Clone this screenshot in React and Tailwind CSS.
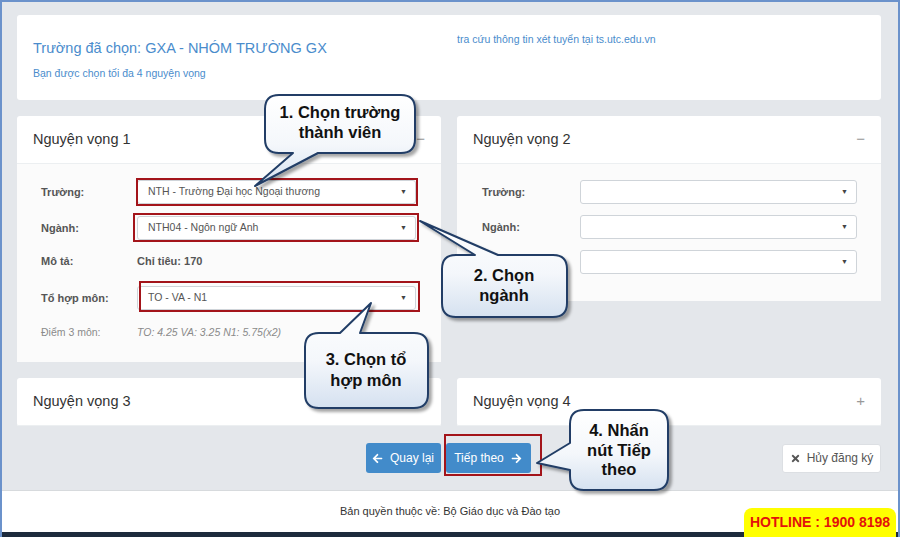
import { FaArrowLeft, FaArrowRight, FaTimes } from "react-icons/fa";

function Select({ value, w }) {
  return (
    <div className={`flex h-[24px] items-center justify-between rounded-[3px] border border-[#cfd4d9] bg-white pl-[10px] pr-[8px] text-[10.5px] text-[#555] ${w}`}>
      <span>{value}</span>
      <span className="text-[7px] text-[#444]">▼</span>
    </div>
  );
}

function Row({ label, children, labelW, className = "" }) {
  return (
    <div className={`flex items-center ${className}`}>
      <div className={`shrink-0 text-[11px] font-bold text-[#555] ${labelW}`}>{label}</div>
      {children}
    </div>
  );
}

function CardHead({ title, sign }) {
  return (
    <div className="flex h-[48px] items-center justify-between border-b border-[#eceff1] pl-4 pr-[16px]">
      <span className="text-[14.5px] text-[#333]">{title}</span>
      <span className="text-[15px] text-[#999]">{sign}</span>
    </div>
  );
}

const bubbles = [
  // rounded rect + tail
  "M279,95 H401 Q415,95 415,109 V139 Q415,153 401,153 H318 L255,186 L293,153 H279 Q265,153 265,139 V109 Q265,95 279,95 Z",
  "M456,255 H475 L420,221 L498,255 H553 Q567,255 567,269 V303 Q567,317 553,317 H456 Q442,317 442,303 V269 Q442,255 456,255 Z",
  "M319,333 H340 L371,303 L360,333 H414 Q428,333 428,347 V394 Q428,408 414,408 H319 Q305,408 305,394 V347 Q305,333 319,333 Z",
  "M584,410 H654 Q668,410 668,424 V476 Q668,490 654,490 H584 Q570,490 570,476 V470 L537,463 L570,443 V424 Q570,410 584,410 Z",
];

const labels = [
  { x: 340, lines: [["1. Chọn trường", 118], ["thành viên", 138]] },
  { x: 504, lines: [["2. Chọn", 281], ["ngành", 301]] },
  { x: 366, lines: [["3. Chọn tổ", 365], ["hợp môn", 386]] },
  { x: 619, lines: [["4. Nhấn", 436], ["nút Tiếp", 456], ["theo", 475]] },
];

export default function App() {
  return (
    <div className="relative h-[537px] w-[900px] overflow-hidden border-x-2 border-t-2 border-[#6b92cb] bg-[#e4e7eb] font-['Liberation_Sans',Arial,sans-serif]">
      <div className="flex h-[488px] flex-col pl-[15px] pr-[17px] pt-[13px]">
        {/* selected school */}
        <div className="flex h-[85px] rounded-[3px] bg-white">
          <div className="w-[440px] pl-4 pt-[23px]">
            <div className="text-[14.5px] text-[#4a8ccc]">Trường đã chọn: GXA - NHÓM TRƯỜNG GX</div>
            <div className="mt-[6px] text-[10.5px] text-[#4a8ccc]">Bạn được chọn tối đa 4 nguyện vọng</div>
          </div>
          <div className="pt-[17px] text-[10.5px] text-[#4a8ccc]">tra cứu thông tin xét tuyển tại ts.utc.edu.vn</div>
        </div>

        <div className="mt-4 grid grid-cols-2 items-start gap-4">
          <div className="rounded-[3px] bg-white">
            <CardHead title="Nguyện vọng 1" sign="−" />
            <div className="bg-[#fbfbfb] pb-[20px] pl-[24px] pr-[25px] pt-4">
              <Row label="Trường:" labelW="w-[96px]">
                <Select w="flex-1" value="NTH - Trường Đại học Ngoại thương" />
              </Row>
              <Row label="Ngành:" labelW="w-[96px]" className="mt-3">
                <Select w="flex-1" value="NTH04 - Ngôn ngữ Anh" />
              </Row>
              <Row label="Mô tả:" labelW="w-[96px]" className="mt-3 h-[18px]">
                <span className="text-[11px] font-bold text-[#555]">Chỉ tiêu: 170</span>
              </Row>
              <Row label="Tổ hợp môn:" labelW="w-[96px]" className="mt-4">
                <Select w="flex-1" value="TO - VA - N1" />
              </Row>
              <div className="mt-[14px] flex h-[18px] items-center text-[10.5px] text-[#8a8a8a]">
                <span className="w-[96px]">Điểm 3 môn:</span>
                <span className="italic">TO: 4.25 VA: 3.25 N1: 5.75(x2)</span>
              </div>
            </div>
          </div>

          <div className="rounded-[3px] bg-white">
            <CardHead title="Nguyện vọng 2" sign="−" />
            <div className="bg-[#fbfbfb] pb-[27px] pl-[25px] pr-[24px] pt-4">
              <Row label="Trường:" labelW="w-[98px]">
                <Select w="flex-1" value="" />
              </Row>
              <Row label="Ngành:" labelW="w-[98px]" className="mt-[11px]">
                <Select w="flex-1" value="" />
              </Row>
              {/* label of this row sits under callout 2 */}
              <Row label="" labelW="w-[98px]" className="mt-[11px]">
                <Select w="flex-1" value="" />
              </Row>
            </div>
          </div>

          <div className="rounded-[3px] bg-white">
            <CardHead title="Nguyện vọng 3" sign="+" />
          </div>
          <div className="rounded-[3px] bg-white">
            <CardHead title="Nguyện vọng 4" sign="+" />
          </div>
        </div>

        <div className="mt-[17px] grid grid-cols-[1fr_auto_1fr] items-center">
          <div />
          <div className="flex gap-[5px] pr-[2px]">
            <button className="flex h-[30px] w-[75px] items-center justify-center gap-[7px] rounded-[3px] bg-[#428bca] text-[12px] text-white">
              <FaArrowLeft className="h-[11px] w-[11px]" />
              Quay lại
            </button>
            <button className="flex h-[30px] w-[85px] items-center justify-center gap-[7px] rounded-[3px] bg-[#428bca] text-[12px] text-white">
              Tiếp theo
              <FaArrowRight className="h-[11px] w-[11px]" />
            </button>
          </div>
          <div className="flex justify-end">
            <button className="flex h-[29px] w-[99px] items-center justify-center gap-[6px] rounded-[3px] border border-[#dcdfe3] bg-white text-[12px] text-[#555]">
              <FaTimes className="h-[11px] w-[11px] text-[#555]" />
              Hủy đăng ký
            </button>
          </div>
        </div>
      </div>

      <div className="flex h-[42px] items-center justify-center border-t border-[#d7dadd] bg-white text-[11px] text-[#333]">
        Bản quyền thuộc về: Bộ Giáo dục và Đào tạo
      </div>
      <div className="h-[5px] bg-[#1d2b3c]" />

      <div className="absolute bottom-0 right-[2px] flex h-[29px] w-[152px] items-center justify-center rounded-t-[8px] bg-[#ffff00] text-[14px] font-bold text-[#e3120b]">
        HOTLINE : 1900 8198
      </div>

      <svg className="pointer-events-none absolute left-[-2px] top-[-2px]" width="900" height="537" viewBox="0 0 900 537">
        <defs>
          <linearGradient id="bub" x1="0" y1="0" x2="0" y2="1">
            <stop offset="0" stopColor="#ffffff" />
            <stop offset="0.55" stopColor="#f4f7fb" />
            <stop offset="1" stopColor="#d5e1f0" />
          </linearGradient>
          <filter id="sh" x="-20%" y="-20%" width="140%" height="140%">
            <feDropShadow dx="3" dy="3" stdDeviation="1.5" floodColor="#000" floodOpacity="0.35" />
          </filter>
        </defs>
        <g fill="none" stroke="#a3141a" strokeWidth="2">
          <rect x="137" y="179" width="280" height="26" />
          <rect x="134" y="214" width="284" height="27" />
          <rect x="140" y="282" width="279" height="29" />
          <rect x="445" y="435" width="96" height="40" />
        </g>
        {bubbles.map((d, i) => (
          <path key={i} d={d} fill="url(#bub)" stroke="#213e66" strokeWidth="2" strokeLinejoin="round" filter="url(#sh)" />
        ))}
        {labels.map((b, i) =>
          b.lines.map(([t, y], j) => (
            <text key={`${i}-${j}`} x={b.x} y={y} textAnchor="middle" fontFamily="Liberation Sans, Arial, sans-serif" fontWeight="700" fontSize="16.5" fill="#111">
              {t}
            </text>
          ))
        )}
      </svg>
    </div>
  );
}
